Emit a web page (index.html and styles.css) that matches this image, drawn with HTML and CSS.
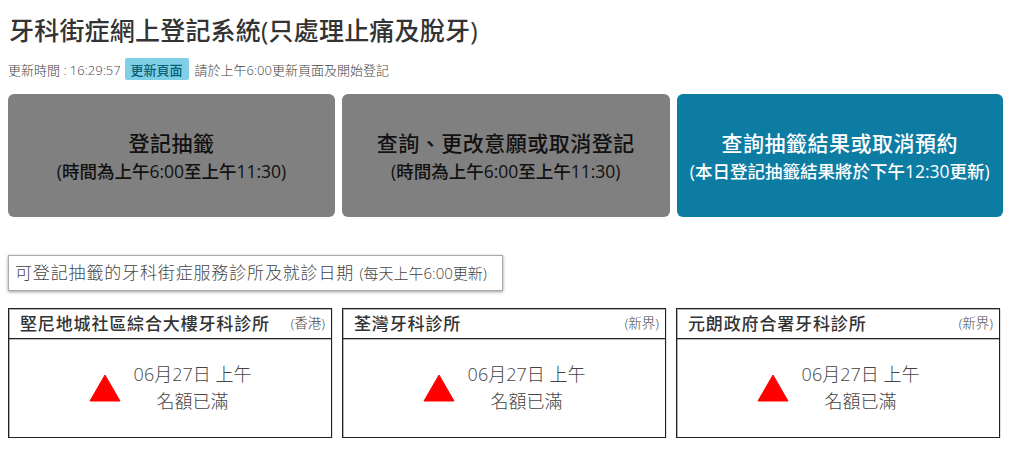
FILE: index.html
```html
<!DOCTYPE html>
<html lang="zh-Hant">
<head>
    <meta charset="UTF-8">
    <meta name="viewport" content="width=device-width, initial-scale=1.0">
    <title>牙科街症網上登記系統</title>
    <link rel="stylesheet" href="styles.css">
</head>
<body>
    <h1 class="page-title">牙科街症網上登記系統(只處理止痛及脫牙)</h1>

    <div class="update-row">
        <span>更新時間 : 16:29:57</span>
        <button class="refresh-btn">更新頁面</button>
        <span>請於上午6:00更新頁面及開始登記</span>
    </div>

    <div class="actions">
        <a class="action action-off">
            <span class="action-title">登記抽籤</span>
            <span class="action-note">(時間為上午6:00至上午11:30)</span>
        </a>
        <a class="action action-off">
            <span class="action-title">查詢、更改意願或取消登記</span>
            <span class="action-note">(時間為上午6:00至上午11:30)</span>
        </a>
        <a class="action action-on">
            <span class="action-title">查詢抽籤結果或取消預約</span>
            <span class="action-note">(本日登記抽籤結果將於下午12:30更新)</span>
        </a>
    </div>

    <div class="section-label">可登記抽籤的牙科街症服務診所及就診日期 <small>(每天上午6:00更新)</small></div>

    <div class="clinics">
        <div class="clinic">
            <div class="clinic-head">
                <span class="clinic-name">堅尼地城社區綜合大樓牙科診所</span>
                <span class="clinic-area">(香港)</span>
            </div>
            <div class="clinic-body">
                <svg class="warn" viewBox="0 0 32 28"><path d="M16 1 L31 27 H1 Z" fill="#f00" stroke="#f00" stroke-width="1" stroke-linejoin="round"/></svg>
                <div class="clinic-status">
                    <div>06月27日 上午</div>
                    <div>名額已滿</div>
                </div>
            </div>
        </div>
        <div class="clinic">
            <div class="clinic-head">
                <span class="clinic-name">荃灣牙科診所</span>
                <span class="clinic-area">(新界)</span>
            </div>
            <div class="clinic-body">
                <svg class="warn" viewBox="0 0 32 28"><path d="M16 1 L31 27 H1 Z" fill="#f00" stroke="#f00" stroke-width="1" stroke-linejoin="round"/></svg>
                <div class="clinic-status">
                    <div>06月27日 上午</div>
                    <div>名額已滿</div>
                </div>
            </div>
        </div>
        <div class="clinic">
            <div class="clinic-head">
                <span class="clinic-name">元朗政府合署牙科診所</span>
                <span class="clinic-area">(新界)</span>
            </div>
            <div class="clinic-body">
                <svg class="warn" viewBox="0 0 32 28"><path d="M16 1 L31 27 H1 Z" fill="#f00" stroke="#f00" stroke-width="1" stroke-linejoin="round"/></svg>
                <div class="clinic-status">
                    <div>06月27日 上午</div>
                    <div>名額已滿</div>
                </div>
            </div>
        </div>
    </div>
</body>
</html>
```

FILE: styles.css
```css
* {
    margin: 0;
    padding: 0;
    box-sizing: border-box;
    font-family: "Open Sans", "Noto Sans CJK TC", sans-serif;
}

body {
    background: white;
    color: #333;
    padding: 0 8px;
    overflow: hidden;
}

/* Heading */
.page-title {
    font-size: 25px;
    font-weight: 500;
    line-height: 32px;
    letter-spacing: 0.2px;
    color: #333;
    padding: 14px 0 0 1px;
}

.update-row {
    display: flex;
    align-items: center;
    gap: 4px;
    height: 24px;
    margin-top: 11px;
    font-size: 13px;
    font-weight: 300;
    color: #444;
}

.refresh-btn {
    height: 22px;
    width: 64px;
    margin-right: 2px;
    border: none;
    border-radius: 2px;
    background: #7fd0e6;
    color: #0b5f78;
    font-size: 13px;
    font-weight: 500;
}

/* Three main buttons */
.actions {
    display: grid;
    grid-template-columns: 327px 327.5px 326.5px;
    gap: 7px;
    margin-top: 13px;
}

.action {
    display: flex;
    flex-direction: column;
    align-items: center;
    justify-content: center;
    height: 123px;
    padding-top: 1px;
    border-radius: 6px;
    text-align: center;
}

.action-off {
    background: #808080;
    color: #111;
}

.action-on {
    background: #0d7ca3;
    color: white;
}

.action-title {
    font-size: 21px;
    font-weight: 500;
    line-height: 30px;
    letter-spacing: 0.5px;
}

.action-note {
    font-size: 17.5px;
    font-weight: 500;
    line-height: 27px;
}

/* Section label */
.section-label {
    display: inline-block;
    margin-top: 38px;
    height: 36px;
    width: 495px;
    padding-left: 6px;
    line-height: 33px;
    font-size: 17px;
    font-weight: 300;
    letter-spacing: 0.85px;
    color: #444;
    border: 1px solid #aaa;
    box-shadow: 0 1px 3px rgba(0, 0, 0, 0.4);
    white-space: nowrap;
}

.section-label small {
    font-size: 15px;
    letter-spacing: 0;
}

/* Clinic cards */
.clinics {
    display: grid;
    grid-template-columns: repeat(3, 324px);
    gap: 10px;
    margin-top: 17px;
}

.clinic {
    height: 130px;
    border: 1px solid #222;
    box-shadow: inset 1px 1px 0 rgba(0, 0, 0, 0.3), 1px 1px 0 rgba(0, 0, 0, 0.12);
}

.clinic-head {
    display: flex;
    justify-content: space-between;
    align-items: center;
    height: 30px;
    padding: 0 6px 3px 11px;
    border-bottom: 1px solid #222;
    box-shadow: 0 1px 0 rgba(0, 0, 0, 0.25);
}

.clinic-name {
    font-size: 17px;
    font-weight: 500;
    letter-spacing: 0.85px;
    color: #333;
}

.clinic-area {
    font-size: 13.5px;
    font-weight: 300;
    color: #444;
}

.clinic-body {
    display: flex;
    justify-content: center;
    align-items: center;
    gap: 13px;
    height: 97px;
}

.warn {
    width: 32px;
    height: 28px;
    margin-top: 1px;
}

.clinic-status {
    font-size: 18px;
    font-weight: 300;
    line-height: 27px;
    color: #444;
    text-align: center;
}
```
